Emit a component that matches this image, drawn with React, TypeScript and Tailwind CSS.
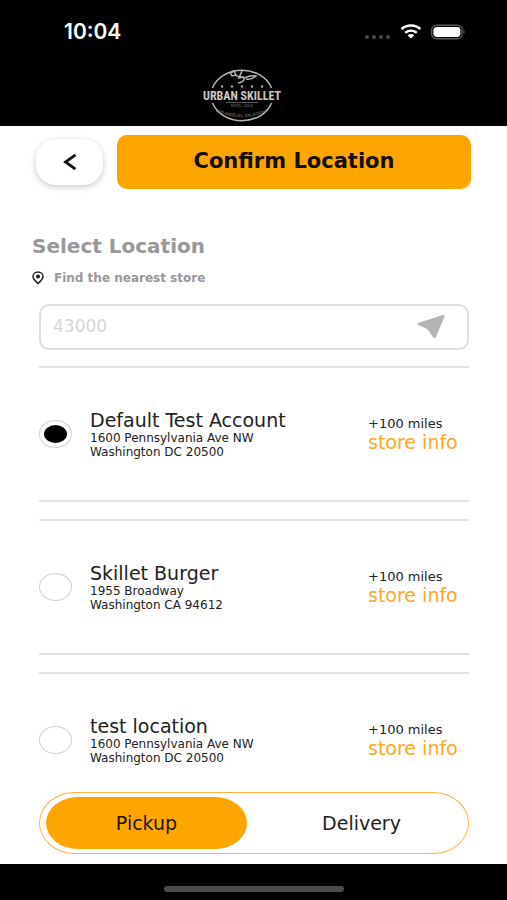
import { useState } from 'react';

const stores = [
  {
    id: 'default',
    name: 'Default Test Account',
    street: '1600 Pennsylvania Ave NW',
    city: 'Washington DC 20500',
    distance: '+100 miles',
  },
  {
    id: 'skillet-burger',
    name: 'Skillet Burger',
    street: '1955 Broadway',
    city: 'Washington CA 94612',
    distance: '+100 miles',
  },
  {
    id: 'test-location',
    name: 'test location',
    street: '1600 Pennsylvania Ave NW',
    city: 'Washington DC 20500',
    distance: '+100 miles',
  },
];

const modes = ['Pickup', 'Delivery'];

function StatusBar() {
  return (
    <div className="flex h-16 items-center justify-between pl-16 pr-10 text-white">
      <time className="font-['Inter',sans-serif] text-[21px] font-semibold">10:04</time>
      <div className="flex items-center gap-2">
        <svg width="28" height="20" viewBox="0 0 28 20" fill="#4a4a4a" aria-hidden="true">
          <circle cx="2" cy="15" r="2" />
          <circle cx="9" cy="15" r="2" />
          <circle cx="16" cy="15" r="2" />
          <circle cx="23" cy="15" r="2" />
        </svg>
        <svg width="22" height="16" viewBox="0 0 22 16" fill="none" stroke="#fff" aria-hidden="true">
          <path d="M.6 5C5.600 .4 14.400 .4 19.400 5" strokeWidth="2.600" />
          <path d="M4.200 8.700C7.600 6 12.400 6 15.800 8.700" strokeWidth="2.400" />
          <path d="M10 14.400L6.600 11.200C8.600 9.600 11.400 9.600 13.400 11.200Z" fill="#fff" stroke="none" />
        </svg>
        <svg width="36" height="16" viewBox="0 0 36 16" aria-hidden="true">
          <rect x=".7" y="1.300" width="30.400" height="13.400" rx="4.600" fill="none" stroke="#5c5c5c" strokeWidth="1.400" />
          <rect x="2.400" y="3" width="27" height="10" rx="3.400" fill="#fff" />
          <path d="M32.500 6v4c1.600-.5 1.600-3.500 0-4Z" fill="#5c5c5c" />
        </svg>
      </div>
    </div>
  );
}

function Logo() {
  return (
    <svg width="84" height="56" viewBox="0 0 84 56" role="img" aria-label="Urban Skillet">
      <g fill="none" stroke="#b5b5b5">
        <path d="M12.500 22A31 25.500 0 0 1 71.500 22" strokeWidth="1.500" />
        <path d="M12.500 37A31 25.500 0 0 0 71.500 37" strokeWidth="1.500" />
        <path d="M30 7l4-2 2 4-4 1-2-3M35 9q5 3 9 2" strokeWidth="1.400" />
        <path d="M42 5l-3 7q5-2 5 1t-6 4M44 12q7-3 12-2-4 4-10 3" strokeWidth="1.500" />
        <path d="M26 36.500H58" strokeWidth=".5" />
      </g>
      <g fill="#a8a8a8">
        {[22, 32, 42, 52, 62].map((x) => (
          <circle key={x} cx={x} cy="20.500" r="1.200" />
        ))}
      </g>
      <text
        x="42"
        y="34"
        textAnchor="middle"
        className="fill-[#c9c9c9] font-['Roboto_Condensed','Roboto',sans-serif] text-[12px] font-bold"
      >
        URBAN SKILLET
      </text>
      <text x="42" y="41" textAnchor="middle" className="fill-[#858585] font-['Liberation_Sans',sans-serif] text-[4px]">
        ESTD. 2014
      </text>
      <path id="motto-arc" d="M15 45Q42 57 69 45" fill="none" />
      <text className="fill-[#9a9a9a] font-['Liberation_Sans',sans-serif] text-[4px]">
        <textPath href="#motto-arc" startOffset="50%" textAnchor="middle">
          LOS ANGELES, CALIFORNIA
        </textPath>
      </text>
    </svg>
  );
}

export default function App() {
  const [selected, setSelected] = useState('default');
  const [mode, setMode] = useState('Pickup');
  const [zip, setZip] = useState('');

  return (
    <div className="flex h-screen flex-col bg-white font-['DejaVu_Sans',sans-serif] text-[#222]">
      <header className="shrink-0 bg-black pb-1">
        <StatusBar />
        <div className="flex justify-center pt-0.5 pr-6">
          <Logo />
        </div>
      </header>

      <main className="flex min-h-0 flex-1 flex-col">
        <div className="flex shrink-0 items-center gap-3.5 px-9 pt-[9px]">
          <button
            aria-label="Back"
            className="flex h-[46px] w-[67px] items-center justify-center rounded-[20px] bg-white shadow-[0_2px_6px_rgba(0,0,0,0.22)]"
          >
            <svg width="14" height="18" viewBox="0 0 14 18" fill="none" stroke="#111" strokeWidth="2.800" aria-hidden="true">
              <path d="M12.500 1.800L2.500 9l10 7.200" />
            </svg>
          </button>
          <button className="h-[54px] flex-1 rounded-[10px] bg-[#ffa500] text-[21px] font-bold text-[#150d00]">
            Confirm Location
          </button>
        </div>

        <div className="shrink-0 px-8 pt-[43px]">
          <h1 className="text-xl leading-7 font-bold text-[#98989b]">Select Location</h1>
          <label htmlFor="zip" className="mt-2 flex items-center gap-2.5 text-xs leading-5 font-bold text-[#98989b]">
            <svg width="12" height="14" viewBox="0 0 12 14" fill="none" stroke="#222" strokeWidth="1.500" aria-hidden="true">
              <path d="M6 12.500C3.500 10.200 1 8.200 1 5.500a5 4.500 0 0 1 10 0C11 8.200 8.500 10.200 6 12.500Z" />
              <circle cx="6" cy="5.500" r="1.300" fill="#222" />
            </svg>
            Find the nearest store
          </label>
        </div>

        <div className="mt-4 mr-[38px] ml-[39px] flex h-[46px] shrink-0 items-center rounded-[10px] border-2 border-[#dedede] pr-5 pl-3">
          <input
            id="zip"
            value={zip}
            onChange={(e) => setZip(e.target.value)}
            placeholder="43000"
            className="min-w-0 flex-1 text-[17px] outline-none placeholder:text-[#d6d6d6]"
          />
          <button aria-label="Use my location">
            <svg width="32" height="26" viewBox="0 0 32 26" fill="#b5b5b5" aria-hidden="true">
              <path d="M3 9L28 1Q30 .5 29.500 2.500L21 23Q19.500 25 18 23L13 16Q12.500 15 11 14.500L3 11Q1.500 10 3 9Z" />
            </svg>
          </button>
        </div>

        <ul className="mt-4 mr-[38px] ml-[39px] flex min-h-0 flex-1 flex-col gap-[17px] overflow-y-auto [scrollbar-width:none]">
          {stores.map((store) => (
            <li key={store.id} className="flex h-[136px] shrink-0 items-center border-y-2 border-[#e2e2e2]">
              <input
                type="radio"
                name="store"
                id={store.id}
                checked={selected === store.id}
                onChange={() => setSelected(store.id)}
                className="h-7 w-[33px] shrink-0 appearance-none rounded-[50%] border border-[#d0d0d0] bg-clip-content p-1 checked:bg-black"
              />
              <label htmlFor={store.id} className="min-w-0 flex-1 pl-[18px]">
                <span className="block text-[19px] leading-[22px]">{store.name}</span>
                <span className="block text-xs leading-3.5">{store.street}</span>
                <span className="block text-xs leading-3.5">{store.city}</span>
              </label>
              <div className="w-[101px] shrink-0">
                <p className="text-[13px] leading-4">{store.distance}</p>
                <a href="#" className="block text-[19px] leading-5 text-[#ffa726]">
                  store info
                </a>
              </div>
            </li>
          ))}
        </ul>

        <div className="mt-1.5 mr-[38px] mb-2.5 ml-[39px] flex h-[62px] shrink-0 gap-3.5 rounded-[36px/50%] border border-[#ffb347] px-1.5 py-1">
          {modes.map((item) => (
            <button
              key={item}
              onClick={() => setMode(item)}
              aria-pressed={mode === item}
              className={
                mode === item
                  ? 'flex-1 rounded-[32px/50%] bg-[#ffa500] text-[19px] text-[#1f1400]'
                  : 'flex-1 rounded-[32px/50%] text-[19px]'
              }
            >
              {item}
            </button>
          ))}
        </div>
      </main>

      <footer className="flex h-9 shrink-0 items-center justify-center bg-black pt-3.5">
        <div className="h-1.5 w-[180px] rounded-full bg-[#4b4b4b]" />
      </footer>
    </div>
  );
}
